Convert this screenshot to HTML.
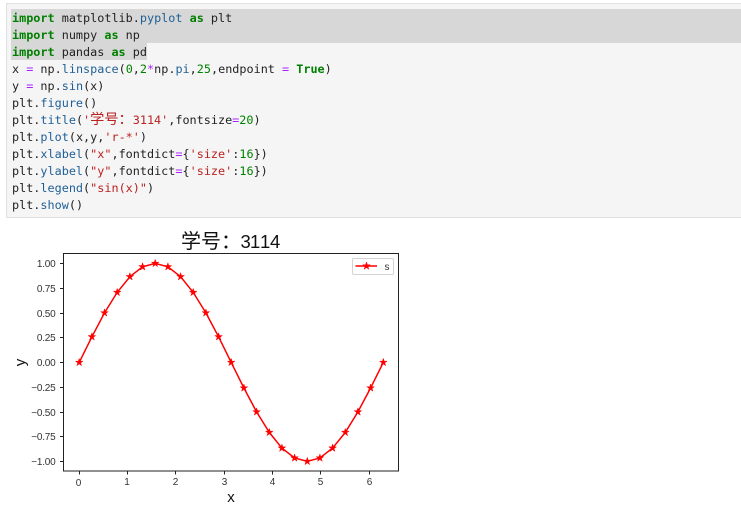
<!DOCTYPE html>
<html><head><meta charset="utf-8">
<style>
html,body{margin:0;padding:0;background:#fff;width:741px;height:507px;overflow:hidden}
#cell{position:absolute;left:6px;top:3px;width:735px;height:215px;box-sizing:border-box;background:#f5f5f5;border:1px solid #e0e0e0;border-right:0}
.sel{position:absolute;background:#d7d7d7;left:11px}
.l{position:absolute;left:12px;height:17px;line-height:19px;white-space:pre;font-family:"DejaVu Sans Mono","Liberation Mono",monospace;font-size:11.8px;color:#222}
.k{color:#008000;font-weight:bold}.o{color:#aa22ff}.n{color:#008000}.s{color:#ba2121}.p{color:#1f5f96}
.c{font-family:"Noto Sans CJK SC",sans-serif;font-size:14.2px;line-height:1}
svg{position:absolute;left:0;top:0}
</style></head><body>
<div id="cell"></div>
<div class="sel" style="top:9px;width:730px;height:34px"></div>
<div class="sel" style="top:43px;width:136px;height:17px"></div>
<div class="l" style="top:9px"><span class="k">import</span> matplotlib.<span class="p">pyplot</span> <span class="k">as</span> plt</div>
<div class="l" style="top:26px"><span class="k">import</span> numpy <span class="k">as</span> np</div>
<div class="l" style="top:43px"><span class="k">import</span> pandas <span class="k">as</span> pd</div>
<div class="l" style="top:60px">x <span class="o">=</span> np.<span class="p">linspace</span>(<span class="n">0</span>,<span class="n">2</span><span class="o">*</span>np.<span class="p">pi</span>,<span class="n">25</span>,endpoint <span class="o">=</span> <span class="k">True</span>)</div>
<div class="l" style="top:77px">y <span class="o">=</span> np.<span class="p">sin</span>(x)</div>
<div class="l" style="top:94px">plt.<span class="p">figure</span>()</div>
<div class="l" style="top:111px">plt.<span class="p">title</span>(<span class="s">'<span class="c">学号：</span>3114'</span>,fontsize<span class="o">=</span><span class="n">20</span>)</div>
<div class="l" style="top:128px">plt.<span class="p">plot</span>(x,y,<span class="s">'r-*'</span>)</div>
<div class="l" style="top:145px">plt.<span class="p">xlabel</span>(<span class="s">"x"</span>,fontdict<span class="o">=</span>{<span class="s">'size'</span>:<span class="n">16</span>})</div>
<div class="l" style="top:162px">plt.<span class="p">ylabel</span>(<span class="s">"y"</span>,fontdict<span class="o">=</span>{<span class="s">'size'</span>:<span class="n">16</span>})</div>
<div class="l" style="top:179px">plt.<span class="p">legend</span>(<span class="s">"sin(x)"</span>)</div>
<div class="l" style="top:196px">plt.<span class="p">show</span>()</div>

<svg width="741" height="507" viewBox="0 0 741 507">
<defs><path id="st" d="M0-4L.9-1.24 3.8-1.24 1.45.47 2.35 3.24 0 1.53-2.35 3.24-1.45.47-3.8-1.24-.9-1.24Z" fill="#f00" stroke="#f00" stroke-width=".5"/></defs>
<rect x="63.5" y="253.5" width="335" height="217.5" fill="#fff" stroke="#222" stroke-width="1"/>
<g stroke="#222" stroke-width="1">
<path d="M79.5 471v3.5M127.5 471v3.5M175.5 471v3.5M224.5 471v3.5M272.5 471v3.5M320.5 471v3.5M369.5 471v3.5"/>
<path d="M60 263.5h3.5M60 288.5h3.5M60 313.5h3.5M60 337.5h3.5M60 362.5h3.5M60 387.5h3.5M60 412.5h3.5M60 436.5h3.5M60 461.5h3.5"/>
</g>
<g font-family="Liberation Sans,sans-serif" font-size="10" fill="#333" text-anchor="end" letter-spacing="-.2">
<text x="55.5" y="267">1.00</text><text x="55.5" y="292">0.75</text><text x="55.5" y="317">0.50</text><text x="55.5" y="341">0.25</text><text x="55.5" y="366">0.00</text>
<text x="55.5" y="391">−0.25</text><text x="55.5" y="416">−0.50</text><text x="55.5" y="440">−0.75</text><text x="55.5" y="465">−1.00</text>
</g>
<g font-family="Liberation Sans,sans-serif" font-size="10" fill="#333" text-anchor="middle">
<text x="78.5" y="486">0</text><text x="127" y="485">1</text><text x="175.5" y="485">2</text><text x="224.5" y="485">3</text><text x="272.5" y="485">4</text><text x="320.5" y="485">5</text><text x="369.5" y="485">6</text>
</g>
<text x="181" y="248" font-family="Noto Sans CJK SC,sans-serif" font-size="20" fill="#111">学号：</text>
<text x="240.5 250 260 270" y="248" font-family="Liberation Sans,sans-serif" font-size="18.5" fill="#111">3114</text>
<text x="231" y="502" font-family="Liberation Sans,sans-serif" font-size="15" fill="#111" text-anchor="middle">x</text>
<text transform="translate(25 362.5) rotate(-90)" font-family="Liberation Sans,sans-serif" font-size="15" fill="#111" text-anchor="middle">y</text>
<polyline fill="none" stroke="#f00" stroke-width="1.5" points="79.2,362.4 91.9,336.8 104.5,312.9 117.2,292.4 129.9,276.7 142.6,266.8 155.2,263.4 167.9,266.8 180.6,276.7 193.2,292.4 205.9,312.9 218.6,336.8 231.2,362.4 243.9,388 256.6,411.9 269.3,432.4 281.9,448.1 294.6,458 307.3,461.4 319.9,458 332.6,448.1 345.3,432.4 357.9,411.9 370.6,388 383.3,362.4"/>
<use href="#st" x="79.2" y="362.4"/><use href="#st" x="91.9" y="336.8"/><use href="#st" x="104.5" y="312.9"/><use href="#st" x="117.2" y="292.4"/><use href="#st" x="129.9" y="276.7"/><use href="#st" x="142.6" y="266.8"/><use href="#st" x="155.2" y="263.4"/><use href="#st" x="167.9" y="266.8"/><use href="#st" x="180.6" y="276.7"/><use href="#st" x="193.2" y="292.4"/><use href="#st" x="205.9" y="312.9"/><use href="#st" x="218.6" y="336.8"/><use href="#st" x="231.2" y="362.4"/><use href="#st" x="243.9" y="388"/><use href="#st" x="256.6" y="411.9"/><use href="#st" x="269.3" y="432.4"/><use href="#st" x="281.9" y="448.1"/><use href="#st" x="294.6" y="458"/><use href="#st" x="307.3" y="461.4"/><use href="#st" x="319.9" y="458"/><use href="#st" x="332.6" y="448.1"/><use href="#st" x="345.3" y="432.4"/><use href="#st" x="357.9" y="411.9"/><use href="#st" x="370.6" y="388"/><use href="#st" x="383.3" y="362.4"/>
<rect x="352.5" y="258.5" width="41" height="16" rx="1.5" fill="#fff" stroke="#d4d4d4" stroke-width="1"/>
<path d="M355.5 266h21.5" stroke="#f00" stroke-width="1.5" fill="none"/>
<use href="#st" x="366.5" y="266"/>
<text x="387" y="270" font-family="Liberation Sans,sans-serif" font-size="10" fill="#333" text-anchor="middle">s</text>
</svg>
</body></html>
